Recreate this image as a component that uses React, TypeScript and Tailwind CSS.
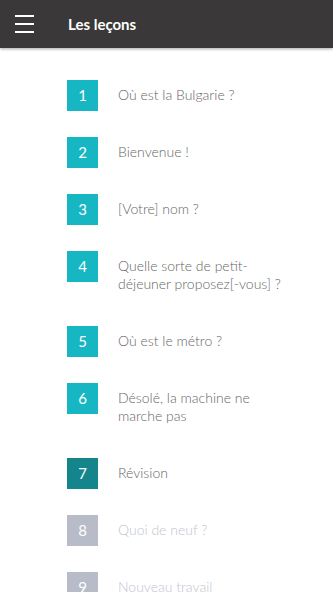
import React from 'react';

type Lesson = {
  n: number;
  title: string;
  state: 'open' | 'current' | 'locked';
};

const lessons: Lesson[] = [
  { n: 1, title: 'Où est la Bulgarie ?', state: 'open' },
  { n: 2, title: 'Bienvenue !', state: 'open' },
  { n: 3, title: '[Votre] nom ?', state: 'open' },
  { n: 4, title: 'Quelle sorte de petit-déjeuner proposez[-vous] ?', state: 'open' },
  { n: 5, title: 'Où est le métro ?', state: 'open' },
  { n: 6, title: 'Désolé, la machine ne marche pas', state: 'open' },
  { n: 7, title: 'Révision', state: 'current' },
  { n: 8, title: 'Quoi de neuf ?', state: 'locked' },
  { n: 9, title: 'Nouveau travail', state: 'locked' },
];

export default function App() {
  return (
    <div className="h-[592px] w-[333px] overflow-hidden bg-white font-['Lato',sans-serif]">
      {/* Top bar */}
      <div className="relative z-10 flex h-12 items-center bg-[#3a3839] shadow-[0_1px_3px_rgba(0,0,0,0.35)]">
        <button className="ml-[15px] flex w-[19px] flex-col gap-[6px]">
          <span className="block h-[2px] w-full bg-white"></span>
          <span className="block h-[2px] w-full bg-white"></span>
          <span className="block h-[2px] w-full bg-white"></span>
        </button>
        <h1 className="ml-[34px] text-[15px] font-bold text-white">Les leçons</h1>
      </div>

      {/* Lesson list */}
      <div className="flex flex-col gap-[26px] pl-[67px] pt-8">
        {lessons.map((lesson) => (
          <div key={lesson.n} className="flex items-start">
            <div
              className={
                lesson.state === 'current'
                  ? 'flex h-[31px] w-[31px] shrink-0 items-center justify-center bg-[#15858c] text-[15px] text-white'
                  : lesson.state === 'locked'
                  ? 'flex h-[31px] w-[31px] shrink-0 items-center justify-center bg-[#b7bcc8] text-[15px] text-white'
                  : 'flex h-[31px] w-[31px] shrink-0 items-center justify-center bg-[#17b6c3] text-[15px] text-white'
              }
            >
              {lesson.n}
            </div>
            <p
              className={
                lesson.state === 'locked'
                  ? 'ml-[20px] w-[170px] pb-[7px] pt-[6px] text-[14px] font-light leading-[18px] text-[#c1c5d0]'
                  : 'ml-[20px] w-[170px] pb-[7px] pt-[6px] text-[14px] font-light leading-[18px] text-[#666666]'
              }
            >
              {lesson.title}
            </p>
          </div>
        ))}
      </div>
    </div>
  );
}
